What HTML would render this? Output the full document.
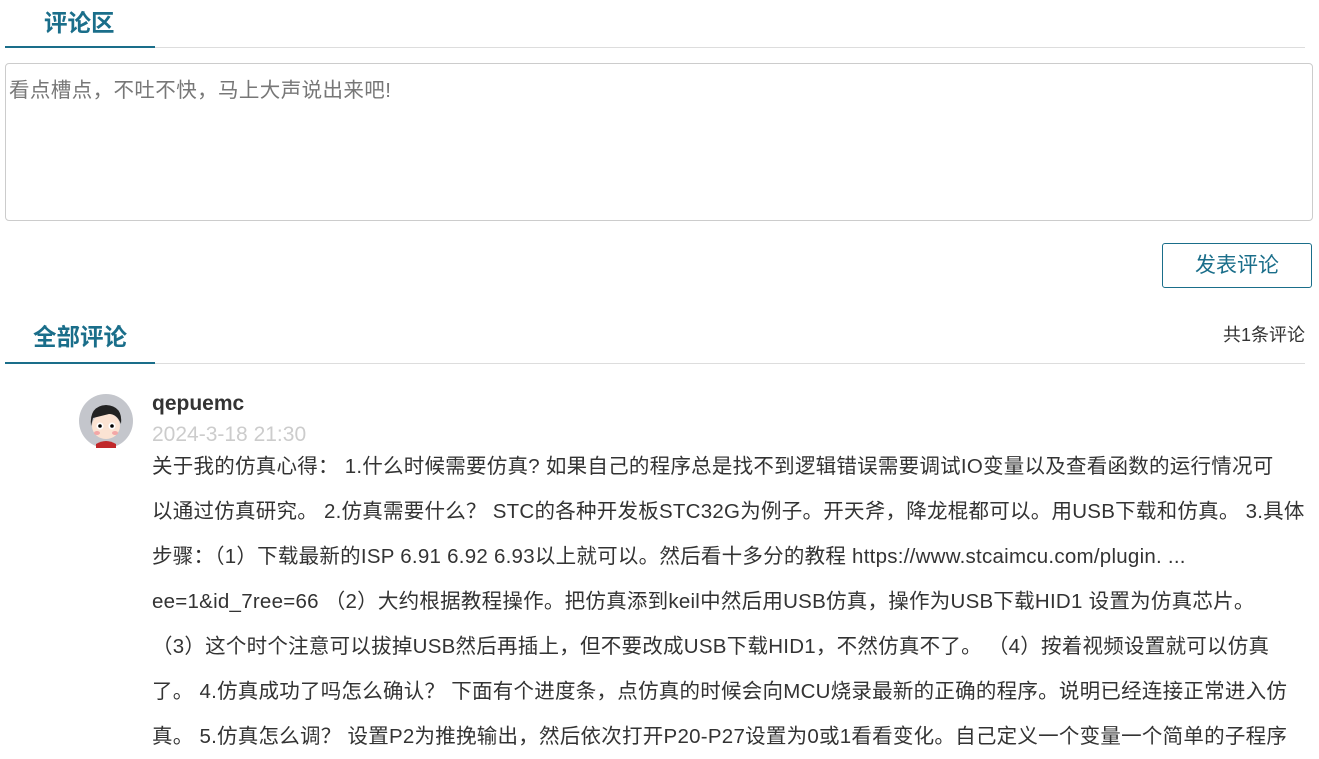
<!DOCTYPE html>
<html><head><meta charset="utf-8"><style>
body{margin:0;width:1319px;height:758px;overflow:hidden;background:#fff;font-family:"Liberation Sans","Noto Sans CJK SC",sans-serif;}
.t{position:absolute;color:#1a6e8a;font-weight:bold;font-size:23.5px;}
.line{position:absolute;height:1px;background:#ddd;}
.ul{position:absolute;height:2px;background:#1a6e8a;}
.box{position:absolute;left:5px;top:63px;width:1306px;height:156px;border:1px solid #ccc;border-radius:4px;}
.ph{position:absolute;left:9px;top:73px;font-size:20.5px;letter-spacing:0.4px;color:#777;}
.btn{position:absolute;left:1162px;top:243px;width:148px;height:43px;border:1px solid #1a6e8a;border-radius:3px;color:#1a6e8a;font-size:21px;text-align:center;line-height:43px;}
.body{position:absolute;left:152px;top:444px;font-size:20.5px;letter-spacing:0.25px;color:#333;line-height:45px;white-space:nowrap;}
</style></head><body>
<div class="t" style="left:44px;top:4px">评论区</div>
<div class="line" style="left:5px;top:47px;width:1300px"></div>
<div class="ul" style="left:5px;top:46px;width:150px"></div>
<div class="box"></div>
<div class="ph">看点槽点，不吐不快，马上大声说出来吧!</div>
<div class="btn">发表评论</div>
<div class="t" style="left:33px;top:318px">全部评论</div>
<div style="position:absolute;left:1223px;top:321px;font-size:18px;color:#333">共1条评论</div>
<div class="line" style="left:5px;top:363px;width:1300px"></div>
<div class="ul" style="left:5px;top:362px;width:150px"></div>
<svg style="position:absolute;left:79px;top:394px" width="54" height="54" viewBox="0 0 54 54">
<circle cx="27" cy="27" r="27" fill="#c4c6cc"/>
<path d="M17 50 Q27 44 37 50 L37 54 L17 54Z" fill="#c0282a"/>
<ellipse cx="27" cy="32" rx="14" ry="13" fill="#fbe3d3"/>
<path d="M12 32 Q10 12 27 11 Q44 12 42 30 Q38 20 30 20 Q22 22 14 24Z" fill="#222"/>
<circle cx="21" cy="32" r="3.5" fill="#fff"/><circle cx="33" cy="32" r="3.5" fill="#fff"/>
<circle cx="21" cy="32" r="1.8" fill="#000"/><circle cx="33" cy="32" r="1.8" fill="#000"/>
<ellipse cx="18" cy="39" rx="3" ry="2" fill="#f3a7a7"/><ellipse cx="36" cy="39" rx="3" ry="2" fill="#f3a7a7"/>
</svg>
<div style="position:absolute;left:152px;top:392px;font-size:21px;font-weight:bold;color:#333">qepuemc</div>
<div style="position:absolute;left:152px;top:423px;font-size:21px;color:#ccc">2024-3-18 21:30</div>
<div class="body">关于我的仿真心得：  1.什么时候需要仿真? 如果自己的程序总是找不到逻辑错误需要调试IO变量以及查看函数的运行情况可<br>以通过仿真研究。 2.仿真需要什么？ STC的各种开发板STC32G为例子。开天斧，降龙棍都可以。用USB下载和仿真。 3.具体<br>步骤：（1）下载最新的ISP 6.91 6.92 6.93以上就可以。然后看十多分的教程 https://www.stcaimcu.com/plugin. ...<br>ee=1&amp;id_7ree=66 （2）大约根据教程操作。把仿真添到keil中然后用USB仿真，操作为USB下载HID1 设置为仿真芯片。<br>（3）这个时个注意可以拔掉USB然后再插上，但不要改成USB下载HID1，不然仿真不了。 （4）按着视频设置就可以仿真<br>了。 4.仿真成功了吗怎么确认？ 下面有个进度条，点仿真的时候会向MCU烧录最新的正确的程序。说明已经连接正常进入仿<br>真。 5.仿真怎么调？ 设置P2为推挽输出，然后依次打开P20-P27设置为0或1看看变化。自己定义一个变量一个简单的子程序</div>
</body></html>
